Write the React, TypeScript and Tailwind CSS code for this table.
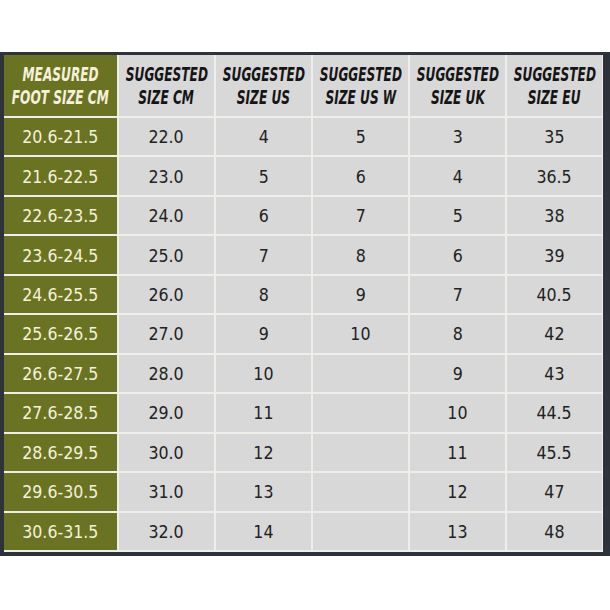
import React from "react";

const headers = [
  ["MEASURED", "FOOT SIZE CM"],
  ["SUGGESTED", "SIZE CM"],
  ["SUGGESTED", "SIZE US"],
  ["SUGGESTED", "SIZE US W"],
  ["SUGGESTED", "SIZE UK"],
  ["SUGGESTED", "SIZE EU"],
];

const rows = [
  ["20.6-21.5", "22.0", "4", "5", "3", "35"],
  ["21.6-22.5", "23.0", "5", "6", "4", "36.5"],
  ["22.6-23.5", "24.0", "6", "7", "5", "38"],
  ["23.6-24.5", "25.0", "7", "8", "6", "39"],
  ["24.6-25.5", "26.0", "8", "9", "7", "40.5"],
  ["25.6-26.5", "27.0", "9", "10", "8", "42"],
  ["26.6-27.5", "28.0", "10", "", "9", "43"],
  ["27.6-28.5", "29.0", "11", "", "10", "44.5"],
  ["28.6-29.5", "30.0", "12", "", "11", "45.5"],
  ["29.6-30.5", "31.0", "13", "", "12", "47"],
  ["30.6-31.5", "32.0", "14", "", "13", "48"],
];

const headFont = {
  fontFamily: '"DejaVu Sans Condensed", "DejaVu Sans", sans-serif',
};
const numFont = {
  fontFamily: '"DejaVu Sans", sans-serif',
};

export default function App() {
  return (
    <div className="w-[610px] h-[610px] bg-white pt-[52px]">
      <div className="w-[610px] bg-[#2e323a] pt-[3px] pb-[4px] pl-[4px] pr-[7px]">
        <div className="grid grid-cols-[113px_repeat(5,minmax(0,1fr))] grid-rows-[61px_repeat(11,minmax(0,1fr))] h-[497px] gap-[2px] bg-[#eeeeea] pr-[1px] pb-[2px]">
          {headers.map((h, i) => (
            <div
              key={i}
              className={
                "flex flex-col items-center justify-center overflow-visible italic font-bold text-[19px] leading-[23px] whitespace-nowrap min-w-0 " +
                (i === 0 ? "bg-[#6a7321] text-[#f4f1dc]" : "bg-[#d8d8d8] text-[#151515]")
              }
              style={headFont}
            >
              <span className="inline-block scale-x-[0.71]">{h[0]}</span>
              <span className="inline-block scale-x-[0.71]">{h[1]}</span>
            </div>
          ))}
          {rows.map((r, ri) =>
            r.map((c, ci) => (
              <div
                key={ri + "-" + ci}
                className={
                  "flex items-center justify-center text-[18px] min-w-0 " +
                  (ci === 0 ? "bg-[#6a7321] text-[#f4f1dc]" : "bg-[#d8d8d8] text-[#222222]")
                }
                style={numFont}
              >
                <span className="inline-block scale-x-[0.88]">{c}</span>
              </div>
            ))
          )}
        </div>
      </div>
    </div>
  );
}
